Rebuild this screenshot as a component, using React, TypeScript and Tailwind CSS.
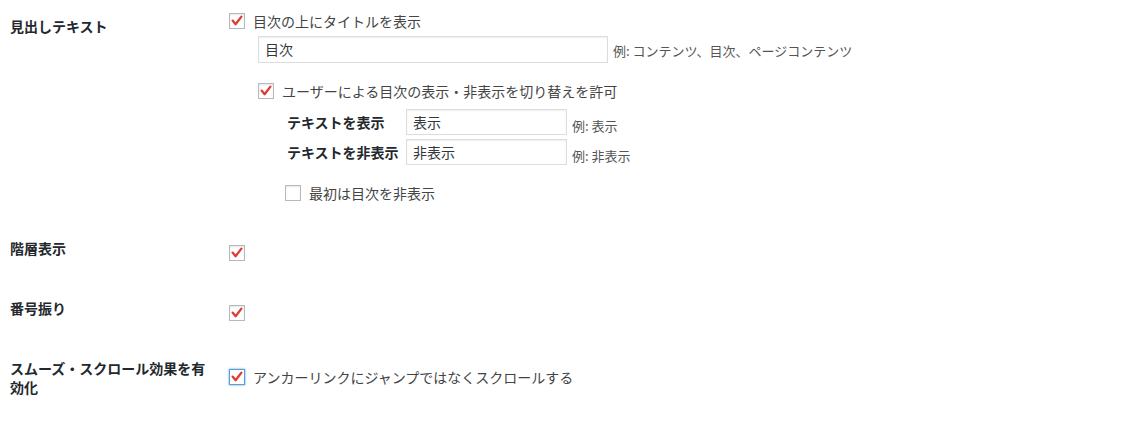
import React from "react";

const font = { fontFamily: '"Noto Sans CJK JP", "Noto Sans", sans-serif' };

function Check({ checked, focus }: { checked?: boolean; focus?: boolean }) {
  return (
    <span
      className={
        "relative inline-block w-[16px] h-[16px] shrink-0 bg-white border " +
        (focus
          ? "border-[#5b9dd9] shadow-[0_0_2px_rgba(30,140,190,0.8)]"
          : "border-[#b4b9be] shadow-[inset_0_1px_2px_rgba(0,0,0,0.1)]")
      }
    >
      {checked && (
        <svg viewBox="0 0 16 16" className="absolute left-[-1px] top-[-1px] w-[16px] h-[16px]">
          <path
            d="M3.6 7.6 L6.6 11.2 L12.4 3.6"
            fill="none"
            stroke="#dc3d36"
            strokeWidth="2.3"
            strokeLinecap="round"
            strokeLinejoin="round"
          />
        </svg>
      )}
    </span>
  );
}

function Input({ value, w, h }: { value: string; w: string; h: string }) {
  return (
    <div
      className={
        w +
        " " +
        h +
        " flex items-center bg-white border border-[#dddddd] shadow-[inset_0_1px_2px_rgba(0,0,0,0.07)] pl-[6px] text-[14px] text-[#32373c]"
      }
    >
      {value}
    </div>
  );
}

export default function App() {
  return (
    <div className="w-[1143px] h-[421px] bg-white text-[#444444] overflow-hidden" style={font}>
      {/* Row 1 */}
      <div className="flex h-[222px]">
        <div className="w-[229px] pl-[10px] pt-[16px] text-[14px] leading-[20px] font-bold text-[#23282d]">
          見出しテキスト
        </div>
        <div className="flex flex-col pt-[13px]">
          <div className="flex items-center h-[16px]">
            <Check checked />
            <span className="ml-[8px] text-[14px] leading-[20px]">目次の上にタイトルを表示</span>
          </div>
          <div className="flex items-center mt-[7px] pl-[29px]">
            <Input value="目次" w="w-[350px]" h="h-[27px]" />
            <span className="ml-[5px] text-[13px] leading-[18px] text-[#555555] mt-[2px]">
              例: コンテンツ、目次、ページコンテンツ
            </span>
          </div>
          <div className="flex items-center h-[16px] mt-[20px] pl-[29px]">
            <Check checked />
            <span className="ml-[8px] text-[14px] leading-[20px]">ユーザーによる目次の表示・非表示を切り替えを許可</span>
          </div>
          <div className="flex items-start mt-[10px] pl-[58px]">
            <div className="w-[119px] h-[26px] flex items-center text-[14px] font-bold text-[#23282d]">
              テキストを表示
            </div>
            <Input value="表示" w="w-[161px]" h="h-[26px]" />
            <span className="ml-[5px] mt-[8px] text-[13px] leading-[17px] text-[#555555]">例: 表示</span>
          </div>
          <div className="flex items-start mt-[4px] pl-[58px]">
            <div className="w-[119px] h-[26px] flex items-center text-[14px] font-bold text-[#23282d]">
              テキストを非表示
            </div>
            <Input value="非表示" w="w-[161px]" h="h-[26px]" />
            <span className="ml-[5px] mt-[8px] text-[13px] leading-[17px] text-[#555555]">例: 非表示</span>
          </div>
          <div className="flex items-center h-[16px] mt-[20px] pl-[56px]">
            <Check />
            <span className="ml-[8px] text-[14px] leading-[20px]">最初は目次を非表示</span>
          </div>
        </div>
      </div>

      {/* Row 2 */}
      <div className="flex h-[60px]">
        <div className="w-[229px] pl-[10px] pt-[17px] text-[14px] leading-[19px] font-bold text-[#23282d]">
          階層表示
        </div>
        <div className="pt-[20px]">
          <Check checked />
        </div>
      </div>

      {/* Row 3 */}
      <div className="flex h-[60px]">
        <div className="w-[229px] pl-[10px] pt-[17px] text-[14px] leading-[19px] font-bold text-[#23282d]">
          番号振り
        </div>
        <div className="pt-[20px]">
          <Check checked />
        </div>
      </div>

      {/* Row 4 */}
      <div className="flex">
        <div className="w-[229px] pl-[10px] pr-[19px] pt-[17px] text-[14px] leading-[19px] font-bold text-[#23282d]">
          スムーズ・スクロール効果を有効化
        </div>
        <div className="pt-[27px]">
          <div className="flex items-center h-[16px]">
            <Check checked focus />
            <span className="ml-[8px] text-[14px] leading-[20px]">アンカーリンクにジャンプではなくスクロールする</span>
          </div>
        </div>
      </div>
    </div>
  );
}
